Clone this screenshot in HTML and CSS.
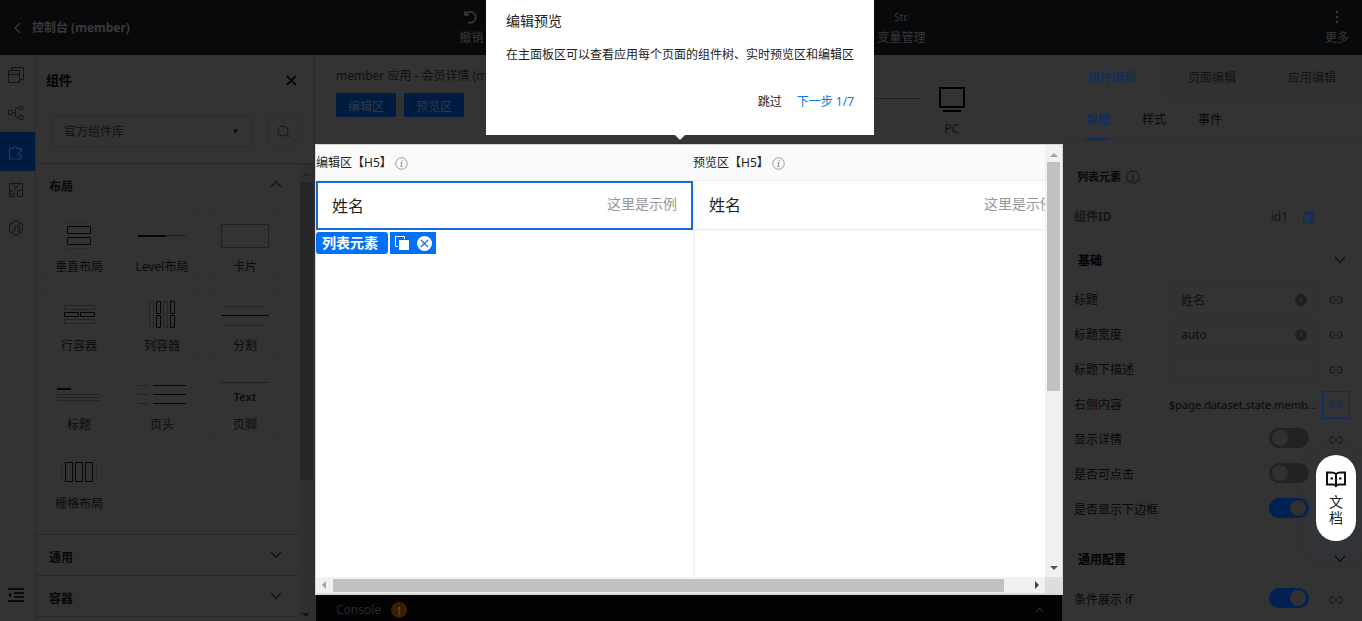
FILE: index.html
```html
<!DOCTYPE html>
<html lang="zh-CN">
<head>
<meta charset="utf-8">
<title>控制台 (member)</title>
<link rel="stylesheet" href="styles.css">
</head>
<body>
<svg class="defs" aria-hidden="true">
  <symbol id="chev" viewBox="0 0 12 8"><path d="M1 1l5 5.500 5-5.500" fill="none" stroke="currentColor" stroke-width="1.100"/></symbol>
  <symbol id="link" viewBox="0 0 14 8"><path d="M6 1H4a3 3 0 0 0 0 6h2M8 1h2a3 3 0 0 1 0 6H8M4.500 4h5" fill="none" stroke="currentColor" stroke-width="1.200"/></symbol>
  <symbol id="info" viewBox="0 0 14 14"><circle cx="7" cy="7" r="6.200" fill="none" stroke="currentColor"/><path d="M7.800 3.200l-.3 1.300M6 6h1.300L6.500 10.300h1.400" fill="none" stroke="currentColor" stroke-width="1.100"/></symbol>
  <symbol id="tri" viewBox="0 0 8 4"><path d="M0 4L4 0l4 4z" fill="currentColor"/></symbol>
  <symbol id="clear" viewBox="0 0 12 12"><circle cx="6" cy="6" r="6" fill="#202020"/><path d="M4.500 4.500l3 3M7.500 4.500l-3 3" stroke="#303030"/></symbol>
</svg>
<div class="app">
  <header class="top">
    <a class="back" href="#"><svg width="7" height="12" viewBox="0 0 7 12"><path d="M6 1L1 6l5 5" fill="none" stroke="currentColor" stroke-width="1.300"/></svg>控制台 (member)</a>
    <nav class="actions">
      <button class="action"><svg width="14" height="14" viewBox="0 0 14 14"><path d="M1 1v4h4M1.500 4.500A5.500 5.500 0 1 1 4 12.200" fill="none" stroke="currentColor" stroke-width="1.600"/></svg>撤销</button>
      <button class="action"><span class="glyph">Str.</span>变量管理</button>
    </nav>
    <div class="more"><button class="action"><svg width="14" height="14" viewBox="0 0 14 14" fill="currentColor"><circle cx="7" cy="2" r="1.300"/><circle cx="7" cy="7" r="1.300"/><circle cx="7" cy="12" r="1.300"/></svg>更多</button></div>
  </header>
  <div class="main">
    <nav class="rail">
      <button aria-label="页面"><svg width="16" height="16" viewBox="0 0 16 16" fill="none" stroke="currentColor"><path d="M.5 3.500h11v12H.5zM.5 7.500h11M3.500 3V.500h12v12H12"/></svg></button>
      <button aria-label="结构"><svg width="16" height="16" viewBox="0 0 16 16" fill="none" stroke="currentColor"><path d="M.5 5.500h4v4h-4zM4.500 7.500h3M11 2.500H9.500a2 2 0 0 0-2 2v6a2 2 0 0 0 2 2H11"/><circle cx="13" cy="3" r="2"/><rect x="11" y="10.500" width="4" height="4" rx="1"/></svg></button>
      <button class="on" aria-label="组件"><svg width="16" height="16" viewBox="0 0 16 16" fill="none" stroke="currentColor" stroke-width="1.200"><path d="M1.500 4.500h3.500a2 2 0 1 1 4 0h4v3a2 2 0 1 0 0 4v3.500h-11.500z"/></svg></button>
      <button aria-label="素材"><svg width="16" height="16" viewBox="0 0 16 16" fill="none" stroke="currentColor"><path d="M7.500 14.500h-6v-13h13v6M1.500 9.500l4-1 3-3M4 1.500l4 4 4-4M9.500 8.500h5v6h-5zM1.500 12h5"/></svg></button>
      <button aria-label="脚本"><svg width="16" height="16" viewBox="0 0 16 16" fill="none" stroke="currentColor"><path d="M8 .6l6.300 3.700v7.400L8 15.400l-6.300-3.700V4.300zM7 5v5q0 1.500-2.500 1.500M12 5.500H9.500V8H12v3H9"/></svg></button>
      <button class="fold" aria-label="收起"><svg width="16" height="14" viewBox="0 0 16 14" stroke="currentColor" stroke-width="1.500"><path d="M0 1h16M6 5h10M6 9h10M0 13h16"/><path d="M3 4.500v5L.5 7z" fill="currentColor" stroke="none"/></svg></button>
    </nav>
    <aside class="panel">
      <div class="panel-head"><h2>组件</h2><button aria-label="关闭"><svg width="11" height="11" viewBox="0 0 11 11"><path d="M1 1l9 9M10 1l-9 9" stroke="currentColor" stroke-width="1.700"/></svg></button></div>
      <div class="search">
        <label class="lib"><select aria-label="组件库"><option>官方组件库</option></select><svg width="5" height="5" viewBox="0 0 6 5"><path d="M0 0h6L3 5z" fill="currentColor"/></svg></label>
        <button aria-label="搜索"><svg width="13" height="13" viewBox="0 0 13 13" fill="none" stroke="currentColor"><circle cx="6" cy="6" r="5"/><path d="M9.500 9.500L12 12"/></svg></button>
      </div>
      <div class="scroll">
        <div class="list">
          <button class="sec first">布局<svg class="up" width="12" height="8"><use href="#chev"/></svg></button>
          <div class="cards">
            <button class="card"><svg width="50" height="30" viewBox="0 0 50 30" fill="none" stroke="#060606"><path d="M13.500 5.500h23v7h-23zM13.500 16.500h23v7h-23z"/><path d="M13 1.500h24M13 27.500h24" stroke="#2a2a2a"/></svg>垂直布局</button>
            <button class="card"><svg width="50" height="30" viewBox="0 0 50 30"><path d="M1 15h28" stroke="#060606" stroke-width="2"/><path d="M29 14.500h20" stroke="#1c1c1c"/></svg>Level布局</button>
            <button class="card"><svg width="50" height="30" viewBox="0 0 50 30"><path d="M1.500 3.500h47v23h-47z" fill="none" stroke="#202020"/></svg>卡片</button>
            <button class="card"><svg width="50" height="30" viewBox="0 0 50 30" fill="none" stroke="#060606"><path d="M10.500 12.500h14v4h-14zM26.500 12.500h14v4h-14z"/><path d="M10.500 5.500h30v4h-30zM10.500 19.500h30v4h-30z" stroke="#242424"/></svg>行容器</button>
            <button class="card"><svg width="50" height="30" viewBox="0 0 50 30" fill="none" stroke="#060606"><path d="M19.500 1.500h4v12h-4zM19.500 15.500h4v12h-4zM33.500 1.500h4v12h-4zM33.500 15.500h4v12h-4z"/><path d="M12.500 1.500h4v26h-4zM26.500 1.500h4v26h-4z" stroke="#242424"/></svg>列容器</button>
            <button class="card"><svg width="50" height="30" viewBox="0 0 50 30"><path d="M1 15.500h48" stroke="#060606"/><path d="M5 6.500h39M5 25.500h39" stroke="#222"/></svg>分割</button>
            <button class="card"><svg width="50" height="30" viewBox="0 0 50 30"><path d="M3 10h14" stroke="#060606" stroke-width="2"/><path d="M3 15.500h44M3 18.500h44M3 21.500h44" stroke="#242424"/></svg>标题</button>
            <button class="card"><svg width="50" height="30" viewBox="0 0 50 30"><path d="M16 6.500h33M16 15.500h33M16 24.500h33" stroke="#060606"/><path d="M1 6.500h10M1 15.500h10M1 24.500h10" stroke="#222"/></svg>页头</button>
            <button class="card"><span class="foot-art">Text</span>页脚</button>
            <button class="card"><svg width="50" height="30" viewBox="0 0 50 30" fill="none" stroke="#060606"><path d="M11.500 4.500h7v19h-7zM21.500 4.500h7v19h-7zM31.500 4.500h7v19h-7z"/><path d="M7.500 4v20M42.500 4v20" stroke="#2a2a2a"/></svg>栅格布局</button>
          </div>
          <button class="sec">通用<svg width="12" height="8"><use href="#chev"/></svg></button>
          <button class="sec">容器<svg width="12" height="8"><use href="#chev"/></svg></button>
          <div class="sec-end"></div>
        </div>
        <div class="bar dim"><svg class="dis" width="8" height="4"><use href="#tri"/></svg><i></i><svg class="down" width="8" height="4"><use href="#tri"/></svg></div>
      </div>
    </aside>
    <main class="center">
      <div class="tools">
        <div>
          <div class="crumb">member 应用 - 会员详情 (m</div>
          <div class="zones"><button>编辑区</button><button>预览区</button></div>
        </div>
        <div class="devices"><span class="track"></span><button class="pc"><svg width="26" height="25" viewBox="0 0 26 25"><path d="M1 1h24v19H1z" fill="none" stroke="#000" stroke-width="2"/><path d="M4 24h18" stroke="#000" stroke-width="2"/></svg>PC</button></div>
      </div>
      <section class="canvas">
        <div class="view">
          <div class="pane">
            <h3>编辑区【H5】<svg width="13" height="13"><use href="#info"/></svg></h3>
            <div class="stage">
              <div class="cell picked"><span>姓名</span><em>这里是示例</em></div>
              <div class="tags"><b>列表元素</b><span class="ops">
                <button aria-label="复制"><svg width="16" height="15" viewBox="0 0 16 15"><path d="M4 10.500H1.500V.5h9V3" fill="none" stroke="#fff"/><path d="M5 4h10v10H5z" fill="#fff"/></svg></button>
                <button aria-label="删除"><svg width="15" height="15" viewBox="0 0 15 15"><circle cx="7.500" cy="7.500" r="7.500" fill="#fff"/><path d="M4 4l7 7M11 4l-7 7" stroke="#0070f3" stroke-width="1.200"/></svg></button></span></div>
            </div>
          </div>
          <div class="pane">
            <h3>预览区【H5】<svg width="13" height="13"><use href="#info"/></svg></h3>
            <div class="stage next"><div class="cell"><span>姓名</span><em>这里是示例</em></div></div>
          </div>
        </div>
        <div class="bar light"><svg width="8" height="4"><use href="#tri"/></svg><i></i><svg class="down" width="8" height="4"><use href="#tri"/></svg></div>
        <div class="hbar"><svg class="l" width="8" height="4"><use href="#tri"/></svg><i></i><svg class="r" width="8" height="4"><use href="#tri"/></svg></div>
        <div class="corner"></div>
      </section>
      <footer class="console">Console <span class="count">1</span><svg class="up" width="9" height="6"><use href="#chev"/></svg></footer>
    </main>
    <aside class="props">
      <nav class="tabs"><a class="on" href="#">组件编辑</a><a href="#">页面编辑</a><a href="#">应用编辑</a></nav>
      <nav class="subtabs"><a class="on" href="#">数据</a><a href="#">样式</a><a href="#">事件</a></nav>
      <h4 class="name">列表元素<svg width="14" height="14" viewBox="0 0 14 14"><circle cx="7" cy="7" r="6.200" fill="none" stroke="currentColor" stroke-width="1.300"/><path d="M5.500 6H7v4M5 10.500h4M7 3v1.500" fill="none" stroke="currentColor" stroke-width="1.200"/></svg></h4>
      <div class="ident"><b>组件ID</b><span>id1</span><button aria-label="复制ID"><svg width="11" height="13" viewBox="0 0 11 13" fill="none" stroke="currentColor" stroke-width="1.300"><path d="M3 .8h7.200v10H8M.8 3H7.500v9.200H3.500L.8 10z"/></svg></button></div>
      <button class="group">基础<svg width="12" height="8"><use href="#chev"/></svg></button>
      <div class="rows">
        <div class="row"><label for="t1">标题</label><span class="field"><input id="t1" value="姓名"><svg width="12" height="12"><use href="#clear"/></svg></span><button class="lk" aria-label="绑定"><svg width="14" height="8"><use href="#link"/></svg></button></div>
        <div class="row"><label for="t2">标题宽度</label><span class="field"><input id="t2" value="auto"><svg width="12" height="12"><use href="#clear"/></svg></span><button class="lk" aria-label="绑定"><svg width="14" height="8"><use href="#link"/></svg></button></div>
        <div class="row"><label for="t3">标题下描述</label><span class="field"><input id="t3"></span><button class="lk" aria-label="绑定"><svg width="14" height="8"><use href="#link"/></svg></button></div>
        <div class="row"><span class="lab">右侧内容</span><span class="expr">$page.dataset.state.memb...</span><button class="lk on" aria-label="绑定"><svg width="14" height="8"><use href="#link"/></svg></button></div>
        <div class="row"><label for="s1">显示详情</label><input class="sw" id="s1" type="checkbox"><button class="lk" aria-label="绑定"><svg width="14" height="8"><use href="#link"/></svg></button></div>
        <div class="row"><label for="s2">是否可点击</label><input class="sw" id="s2" type="checkbox"><button class="lk" aria-label="绑定"><svg width="14" height="8"><use href="#link"/></svg></button></div>
        <div class="row"><label for="s3">是否显示下边框</label><input class="sw" id="s3" type="checkbox" checked><button class="lk" aria-label="绑定"><svg width="14" height="8"><use href="#link"/></svg></button></div>
      </div>
      <button class="group later">通用配置<svg width="12" height="8"><use href="#chev"/></svg></button>
      <div class="rows"><div class="row"><label for="s4">条件展示 if</label><input class="sw" id="s4" type="checkbox" checked><button class="lk" aria-label="绑定"><svg width="14" height="8"><use href="#link"/></svg></button></div></div>
    </aside>
  </div>
</div>
<div class="tour" role="dialog" aria-label="编辑预览">
  <h1>编辑预览</h1>
  <p>在主面板区可以查看应用每个页面的组件树、实时预览区和编辑区</p>
  <div class="tour-foot"><button>跳过</button><button class="next-step">下一步 1/7</button></div>
</div>
<a class="docs" href="#"><svg width="20" height="17" viewBox="0 0 20 17" fill="none" stroke="#111" stroke-width="2"><path d="M10 3Q8 1.500 5.500 1.500H1v12h6q2 0 3 1.500 1-1.500 3-1.500h6v-12h-4.500Q12 1.500 10 3v12M4.500 7.500H7M13 7.500h2.500"/></svg><span>文</span><span>档</span></a>
</body>
</html>
```
FILE: styles.css
```css
* { box-sizing: border-box; }
body { margin: 0; background: #333; color: #080808; font: 12px/18px "Noto Sans", "Noto Sans CJK SC", sans-serif; overflow: hidden; }
button { font: inherit; color: inherit; background: none; border: 0; padding: 0; }
a { color: inherit; text-decoration: none; }
h1, h2, h3, h4, p { margin: 0; font-size: inherit; }
svg { display: block; flex: none; }
.defs { position: absolute; width: 0; height: 0; }
.up { transform: rotate(180deg); }
.down { transform: rotate(180deg); }

.app { display: flex; flex-direction: column; height: 100vh; }
.top { display: grid; grid-template-columns: 315px 1fr 300px; height: 55px; flex: none; background: #08090b; color: #3a3a3b; }
.back { display: flex; align-items: center; gap: 11px; padding-left: 14px; font-weight: bold; }
.actions { display: flex; align-items: center; justify-content: center; gap: 394px; padding-left: 8px; white-space: nowrap; }
.action { display: flex; flex-direction: column; align-items: center; gap: 4px; }
.action svg, .glyph { height: 16px; }
.glyph { font-size: 10px; line-height: 16px; }
.more { display: flex; align-items: center; justify-content: flex-end; padding-right: 13px; }
.main { display: flex; flex: 1; min-height: 0; }

.rail { display: flex; flex-direction: column; width: 36px; flex: none; border-right: 1px solid #2b2b2b; color: #141414; padding-top: 1px; }
.rail button { display: flex; align-items: center; height: 38px; padding-left: 8px; flex: none; }
.rail .on { height: 39px; background: #001a40; color: #233c5e; }
.rail .fold { margin-top: auto; margin-bottom: 7px; color: #000; }

.panel { display: flex; flex-direction: column; width: 279px; flex: none; border-right: 2px solid #2d2d2d; }
.panel-head { display: flex; justify-content: space-between; align-items: center; height: 50px; padding: 0 16px 0 10px; color: #000; }
.panel-head h2 { font-size: 13px; }
.search { display: flex; justify-content: space-between; padding: 10px 14px 16px 16px; border-bottom: 1px solid #282828; }
.lib { display: flex; align-items: center; width: 200px; height: 32px; border: 1px solid #2b2b2b; border-radius: 2px; padding-right: 13px; }
.lib select { appearance: none; flex: 1; height: 30px; border: 0; background: none; font: inherit; color: #101010; padding: 1px 11px 0; }
.search button { display: grid; place-items: center; width: 31px; height: 32px; border: 1px solid #2e2e2e; color: #131313; }
.scroll { display: flex; flex: 1; min-height: 0; }
.list { flex: 1; overflow: hidden; }
.sec { display: flex; justify-content: space-between; align-items: center; width: 100%; height: 41px; border-top: 1px solid #282828; padding: 5px 17px 0 13px; font-weight: bold; }
.sec svg { margin-bottom: 6px; }
.sec.first { height: 45px; border: 0; padding-top: 0; }
.sec-end { border-top: 1px solid #282828; }
.cards { display: grid; grid-template-columns: repeat(3, 70px); gap: 8px 13px; padding: 0 0 17px 8px; }
.card { display: flex; flex-direction: column; align-items: center; justify-content: flex-end; gap: 7px; height: 71px; padding-bottom: 3px; border: 1px solid #303030; color: #0b0b0b; white-space: nowrap; }
.foot-art { width: 48px; height: 27px; border-top: 1px solid #222; font-size: 11px; line-height: 27px; font-weight: 600; }
.bar { display: flex; flex-direction: column; align-items: center; justify-content: space-between; }
.bar i { width: 13px; }
.dim { width: 14px; background: #303030; padding: 8px 0 4px; color: #111; }
.dim i { height: 67%; margin: 6px 0 auto; background: #272727; }
.dis { opacity: .4; }

.center { display: flex; flex-direction: column; flex: 1; min-width: 0; }
.tools { display: flex; justify-content: space-between; height: 89px; padding: 12px 97px 0 21px; color: #101010; }
.zones { display: flex; gap: 8px; margin-top: 8px; }
.zones button { width: 60px; height: 24px; padding-top: 3px; border-radius: 2px; background: #001a40; color: #2f3b48; }
.devices { display: flex; gap: 18px; padding-top: 20px; }
.track { width: 60px; height: 12px; border-bottom: 1px solid #1e1e1e; }
.pc { display: flex; flex-direction: column; align-items: center; justify-content: flex-start; gap: 8px; }
.canvas { display: grid; grid-template: minmax(0, 1fr) 16px / minmax(0, 1fr) 17px; flex: 1; min-height: 0; background: #fff; border: 1px solid #d8d8d8; border-width: 1px 1px 2px; margin-right: -1px; z-index: 1; }
.view { display: flex; overflow: hidden; }
.pane { display: flex; flex-direction: column; width: 377px; flex: none; }
.pane h3 { display: flex; align-items: center; gap: 3px; height: 36px; padding-top: 1px; background: #fafafa; border-bottom: 1px solid #eee; font-weight: normal; color: #222; }
.pane h3 svg { color: #8d959d; }
.stage { flex: 1; font-size: 16px; }
.next { border-left: 2px solid #f4f4f4; }
.cell { display: flex; align-items: center; justify-content: space-between; height: 49px; padding: 0 16px 0 14px; border-bottom: 1px solid #ebebeb; color: #222; }
.cell em { margin-bottom: 3px; font-style: normal; font-size: 14px; color: #969799; }
.picked { border: 2px solid #1768d8; padding: 0 14px; }
.tags { display: flex; gap: 2px; margin-top: 2px; }
.tags b { height: 22px; padding: 0 10px 0 6px; border-radius: 3px; background: #0070f8; color: #fff; font-size: 14px; line-height: 22px; }
.ops { display: flex; align-items: center; gap: 7px; height: 22px; padding: 0 4px; background: #0070f8; }
.light { background: #f1f1f1; padding: 8px 0 7px; color: #555; }
.light svg:first-child, .l { color: #a3a3a3; }
.light i { height: 55%; margin: 5px 0 auto; background: #c1c1c1; }
.hbar { display: flex; align-items: center; background: #f1f1f1; padding: 0 4px; color: #444; }
.hbar i { width: 93%; height: 13px; margin: 0 auto 0 5px; background: #c1c1c1; }
.l { transform: rotate(-90deg); }
.r { transform: rotate(90deg); }
.corner { background: #ddd; }
.console { display: flex; align-items: center; gap: 10px; height: 26px; margin-left: 1px; padding: 3px 18px 0 20px; background: #030306; color: #29292b; }
.console .up { margin-left: auto; color: #444; }
.count { display: grid; place-items: center; width: 16px; height: 16px; border-radius: 8px; background: #3a2000; color: #765020; font-size: 10px; }

.props { display: flex; flex-direction: column; width: 300px; flex: none; overflow: hidden; }
.tabs { display: flex; height: 43px; flex: none; }
.tabs a { flex: 1; display: grid; place-items: center; padding-top: 2px; background: #313131; color: #111; }
.tabs .on { background: #333; color: #082c64; }
.subtabs { display: flex; gap: 32px; height: 43px; padding-left: 24px; border-bottom: 1px solid #2e2e2e; flex: none; }
.subtabs a { height: 42px; padding-top: 13px; }
.subtabs .on { color: #082c64; border-bottom: 2px solid #082c64; }
.name { display: flex; align-items: center; gap: 5px; height: 72px; padding-left: 15px; flex: none; font-size: 11px; }
.name svg { color: #1c1c1c; }
.ident { display: flex; align-items: center; height: 28px; padding: 0 48px 0 12px; margin: -10px 0 9px; flex: none; color: #161616; }
.ident span { margin-left: auto; margin-right: 15px; }
.ident button { color: #082c64; }
.group { display: flex; align-items: center; justify-content: space-between; height: 40px; flex: none; padding: 0 16px; border-top: 1px solid #303030; font-weight: bold; color: #000; }
.group svg { margin-bottom: 2px; }
.group.later { margin-top: 13px; border: 0; }
.rows { padding: 2px 12px 0; }
.row { display: flex; align-items: center; height: 35px; }
.row > label, .lab { flex: 1; white-space: nowrap; }
.field, .expr { display: flex; align-items: center; width: 150px; height: 27px; margin-right: 3px; }
.field { border: 1px solid #2f2f2f; padding-right: 11px; }
.field input { flex: 1; min-width: 0; height: 25px; border: 0; padding: 0 11px; background: none; color: #0d0d0d; font: inherit; }
.expr { white-space: nowrap; font-size: 11px; }
.lk { display: grid; place-items: center; width: 28px; height: 28px; color: #191919; flex: none; }
.lk.on { border: 1px solid #0b2d66; color: #0b2d66; }
.sw { appearance: none; display: flex; width: 40px; height: 20px; margin: 0 13px 3px 0; padding: 2px 3px; border-radius: 10px; background: #222; }
.sw::before { content: ""; width: 16px; height: 16px; border-radius: 8px; background: #313131; }
.sw:checked { background: #002152; justify-content: flex-end; }

.tour { position: absolute; z-index: 5; top: 0; left: calc(50% - 195px); width: 388px; height: 135px; padding: 11px 20px; background: #fff; color: #222; }
.tour::after { content: ""; position: absolute; left: 50%; top: 100%; margin-left: -5px; border: 5px solid transparent; border-top-color: #fff; border-bottom: 0; }
.tour h1 { font-size: 14px; line-height: 20px; font-weight: normal; }
.tour p { margin-top: 15px; white-space: nowrap; }
.tour-foot { display: flex; justify-content: flex-end; gap: 15px; margin-top: 29px; }
.next-step { color: #0a74e8; }
.docs { position: absolute; z-index: 5; right: 6px; bottom: 80px; display: flex; flex-direction: column; align-items: center; width: 40px; height: 86px; padding-top: 16px; border-radius: 20px; background: #fff; color: #222; font-size: 14px; line-height: 16px; box-shadow: 0 8px 24px rgba(30, 70, 130, .2); }
.docs svg { margin-bottom: 6px; }
```
